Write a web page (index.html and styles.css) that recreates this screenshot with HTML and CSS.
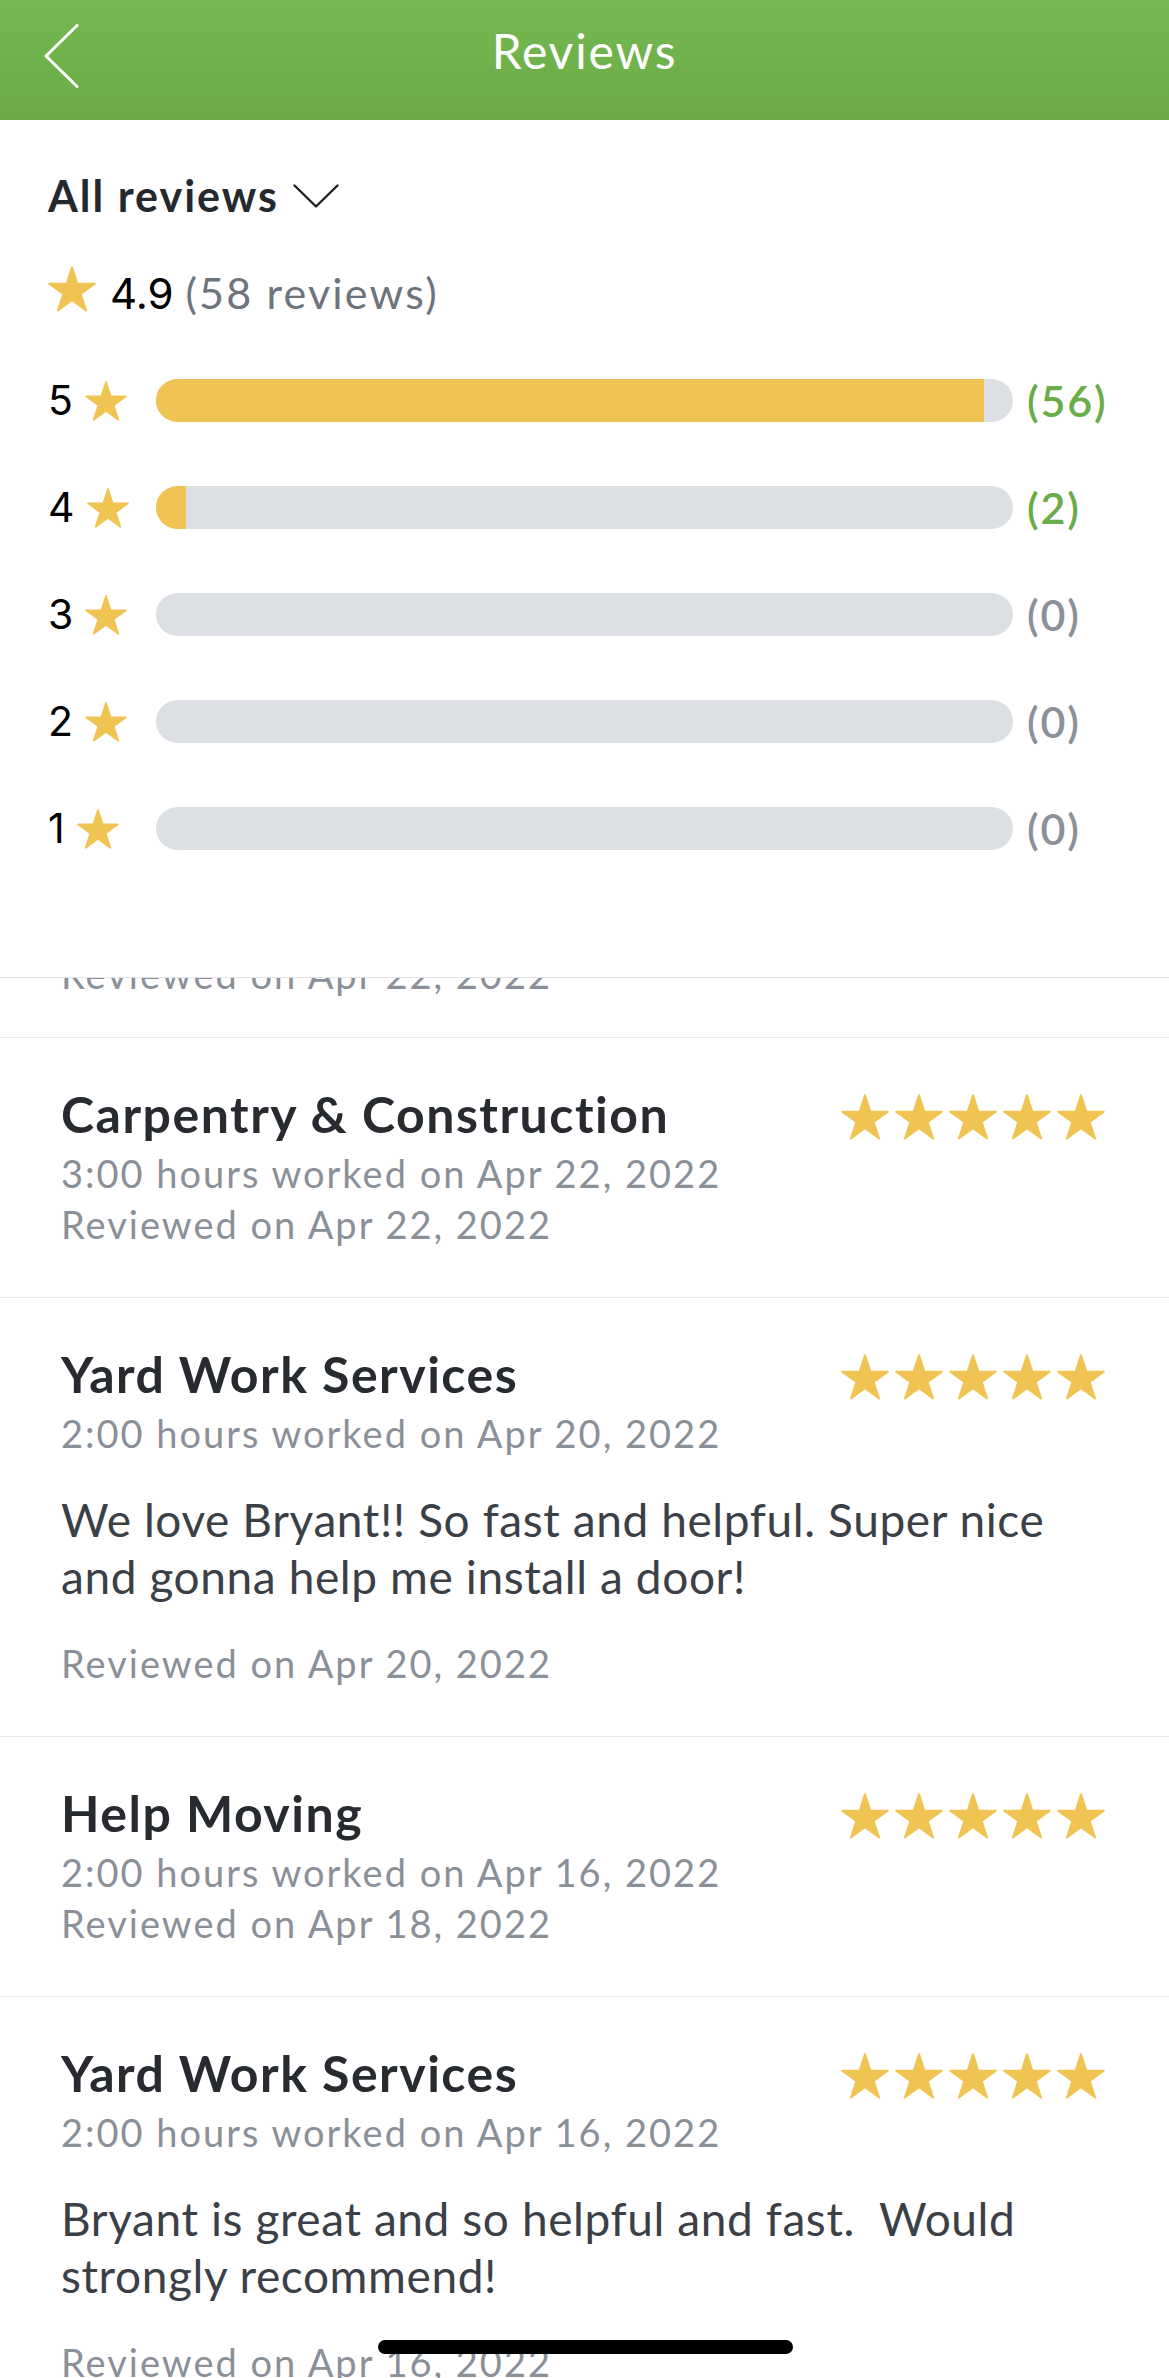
FILE: index.html
```html
<!DOCTYPE html>
<html lang="en">
<head>
<meta charset="utf-8">
<title>Reviews</title>
<link rel="stylesheet" href="styles.css">
</head>
<body>
<svg class="sprite" aria-hidden="true">
  <symbol id="star" viewBox="0 -2 100 95">
    <path d="M50 0L61.23 34.55L97.55 34.55L68.16 55.9L79.39 90.45L50 69.1L20.61 90.45L31.84 55.9L2.45 34.55L38.77 34.55Z" fill="#f0c453" stroke="#f0c453" stroke-width="4" stroke-linejoin="round"/>
  </symbol>
</svg>

<header class="topbar">
  <div class="topbar-side">
    <svg class="back" viewBox="0 0 35 64"><path d="M33 1.5L2 32L33 62.5" fill="none" stroke="#fff" stroke-width="3" stroke-linecap="round" stroke-linejoin="round"/></svg>
  </div>
  <h1 class="topbar-title">Reviews</h1>
  <div class="topbar-side"></div>
</header>

<section class="summary">
  <div class="filter">
    <span class="filter-label">All reviews</span>
    <svg class="caret" viewBox="0 0 46 24"><path d="M1.5 1.5L23 22.5L44.5 1.5" fill="none" stroke="#1d1f22" stroke-width="2.4" stroke-linecap="round" stroke-linejoin="round"/></svg>
  </div>
  <div class="rating">
    <svg class="star star-lg"><use href="#star"/></svg>
    <p class="rating-text"><span class="rating-value">4.9</span> <span class="rating-count">(58 reviews)</span></p>
  </div>
  <div class="dist">
    <div class="dist-label"><span class="dist-num">5</span><svg class="star star-md"><use href="#star"/></svg></div>
    <div class="bar"><div class="bar-fill" style="width:96.6%"></div></div>
    <span class="dist-count is-active">(56)</span>

    <div class="dist-label"><span class="dist-num">4</span><svg class="star star-md"><use href="#star"/></svg></div>
    <div class="bar"><div class="bar-fill" style="width:3.45%"></div></div>
    <span class="dist-count is-active">(2)</span>

    <div class="dist-label"><span class="dist-num">3</span><svg class="star star-md"><use href="#star"/></svg></div>
    <div class="bar"></div>
    <span class="dist-count">(0)</span>

    <div class="dist-label"><span class="dist-num">2</span><svg class="star star-md"><use href="#star"/></svg></div>
    <div class="bar"></div>
    <span class="dist-count">(0)</span>

    <div class="dist-label"><span class="dist-num">1</span><svg class="star star-md"><use href="#star"/></svg></div>
    <div class="bar"></div>
    <span class="dist-count">(0)</span>
  </div>
</section>

<main class="list">
  <div class="card card-clipped">
    <p class="meta">Reviewed on Apr 22, 2022</p>
  </div>

  <article class="card">
    <div class="card-head">
      <h2 class="card-title">Carpentry &amp; Construction</h2>
      <div class="stars">
        <svg class="star star-card"><use href="#star"/></svg><svg class="star star-card"><use href="#star"/></svg><svg class="star star-card"><use href="#star"/></svg><svg class="star star-card"><use href="#star"/></svg><svg class="star star-card"><use href="#star"/></svg>
      </div>
    </div>
    <p class="meta meta-first">3:00 hours worked on Apr 22, 2022</p>
    <p class="meta">Reviewed on Apr 22, 2022</p>
  </article>

  <article class="card">
    <div class="card-head">
      <h2 class="card-title">Yard Work Services</h2>
      <div class="stars">
        <svg class="star star-card"><use href="#star"/></svg><svg class="star star-card"><use href="#star"/></svg><svg class="star star-card"><use href="#star"/></svg><svg class="star star-card"><use href="#star"/></svg><svg class="star star-card"><use href="#star"/></svg>
      </div>
    </div>
    <p class="meta meta-first">2:00 hours worked on Apr 20, 2022</p>
    <p class="comment">We love Bryant!! So fast and helpful. Super nice and gonna help me install a door!</p>
    <p class="meta meta-after">Reviewed on Apr 20, 2022</p>
  </article>

  <article class="card">
    <div class="card-head">
      <h2 class="card-title">Help Moving</h2>
      <div class="stars">
        <svg class="star star-card"><use href="#star"/></svg><svg class="star star-card"><use href="#star"/></svg><svg class="star star-card"><use href="#star"/></svg><svg class="star star-card"><use href="#star"/></svg><svg class="star star-card"><use href="#star"/></svg>
      </div>
    </div>
    <p class="meta meta-first">2:00 hours worked on Apr 16, 2022</p>
    <p class="meta">Reviewed on Apr 18, 2022</p>
  </article>

  <article class="card">
    <div class="card-head">
      <h2 class="card-title">Yard Work Services</h2>
      <div class="stars">
        <svg class="star star-card"><use href="#star"/></svg><svg class="star star-card"><use href="#star"/></svg><svg class="star star-card"><use href="#star"/></svg><svg class="star star-card"><use href="#star"/></svg><svg class="star star-card"><use href="#star"/></svg>
      </div>
    </div>
    <p class="meta meta-first">2:00 hours worked on Apr 16, 2022</p>
    <p class="comment">Bryant is great and so helpful and fast.&nbsp; Would strongly recommend!</p>
    <p class="meta meta-after">Reviewed on Apr 16, 2022</p>
  </article>
</main>

<div class="home-indicator"></div>
</body>
</html>
```

FILE: styles.css
```css
* { box-sizing: border-box; }

html, body {
  margin: 0;
  padding: 0;
  background: #ffffff;
}

body {
  font-family: Lato, "Open Sans", Arial, sans-serif;
  color: #272b30;
  height: 2378px;
  overflow: hidden;
  position: relative;
}

.sprite {
  position: absolute;
  width: 0;
  height: 0;
  overflow: hidden;
}

/* ---------- Top bar ---------- */
.topbar {
  height: 120px;
  background: linear-gradient(#75b850, #6aab46);
  display: grid;
  grid-template-columns: 1fr auto 1fr;
  align-items: start;
  padding-top: 21px;
}

.topbar-side {
  padding-left: 44px;
}

.back {
  display: block;
  width: 35px;
  height: 64px;
  margin-top: 3px;
}

.topbar-title {
  margin: 0;
  font-weight: 400;
  font-size: 48px;
  letter-spacing: 1.8px;
  line-height: 60px;
  color: #ffffff;
}

/* ---------- Summary ---------- */
.summary {
  padding: 46px 0 127px 48px;
  border-bottom: 1px solid #e4e4e6;
}

.filter {
  display: flex;
  align-items: center;
  gap: 14px;
  height: 60px;
}

.filter-label {
  font-weight: 700;
  font-size: 43px;
  letter-spacing: 2px;
  line-height: 60px;
  color: #25292e;
}

.caret {
  display: block;
  width: 46px;
  height: 24px;
}

.rating {
  display: flex;
  align-items: center;
  gap: 14px;
  margin-top: 27px;
}

.star {
  display: block;
  flex: none;
}

.star-lg { width: 48px; height: 46px; }
.star-md { width: 42px; height: 40px; }
.star-card { width: 48px; height: 46px; }

.rating-text {
  margin: 10px 0 0;
  font-family: Inter, "Liberation Sans", Arial, sans-serif;
  font-size: 42px;
  line-height: 60px;
  color: #000000;
}

.rating-count {
  font-family: Lato, "Open Sans", Arial, sans-serif;
  font-size: 43px;
  letter-spacing: 2.2px;
  color: #6e747c;
}

.dist {
  margin-top: 55px;
  display: grid;
  grid-template-columns: 108px 1fr 156px;
  grid-auto-rows: 43px;
  row-gap: 64px;
  align-items: center;
}

.dist-label {
  display: flex;
  align-items: center;
  gap: 12px;
}

.dist-num {
  font-family: Inter, "Liberation Sans", Arial, sans-serif;
  font-size: 41px;
  line-height: 43px;
  color: #000000;
}

.bar {
  height: 43px;
  border-radius: 22px;
  background: #dcdfe3;
  overflow: hidden;
}

.bar-fill {
  height: 100%;
  background: #f0c453;
}

.dist-count {
  padding-left: 14px;
  font-size: 43px;
  font-weight: 600;
  letter-spacing: 1.8px;
  line-height: 43px;
  color: #8b9198;
}

.dist-count.is-active {
  color: #6aab4a;
}

/* ---------- Review list ---------- */
.card {
  padding: 46px 64px 47px 61px;
  border-bottom: 1px solid #e8e8ea;
}

.card-clipped {
  height: 60px;
  padding-top: 0;
  padding-bottom: 37px;
  display: flex;
  flex-direction: column;
  justify-content: flex-end;
  overflow: hidden;
}

.card-head {
  display: flex;
  justify-content: space-between;
  align-items: flex-start;
}

.card-title {
  margin: 0;
  font-size: 50px;
  letter-spacing: 1.5px;
  line-height: 60px;
  font-weight: 700;
  color: #272b30;
}

.stars {
  display: flex;
  gap: 6px;
  margin-top: 10px;
}

.meta {
  margin: 0;
  font-size: 38px;
  letter-spacing: 2px;
  line-height: 51px;
  color: #8a9098;
  flex: none;
}

.meta-first {
  margin-top: 4px;
}

.comment {
  margin: 32px 0 0;
  font-size: 46px;
  letter-spacing: 0.6px;
  line-height: 57px;
  color: #3b4047;
}

.meta-after {
  margin-top: 33px;
}

.home-indicator {
  position: absolute;
  left: 378px;
  bottom: 24px;
  width: 415px;
  height: 14px;
  border-radius: 7px;
  background: #000000;
}
```
